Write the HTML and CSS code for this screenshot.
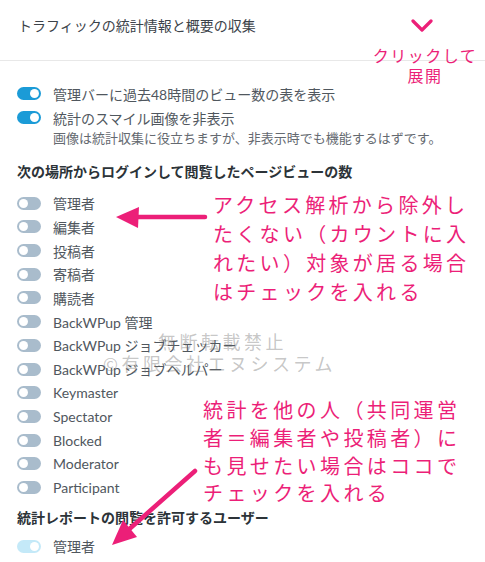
FILE: index.html
```html
<!DOCTYPE html>
<html lang="ja">
<head>
    <meta charset="UTF-8">
    <meta name="viewport" content="width=device-width, initial-scale=1.0">
    <title>トラフィックの統計情報と概要の収集</title>
    <link rel="stylesheet" href="styles.css">
</head>
<body>
    <div class="page">
        <div class="header">
            <h2 class="title">トラフィックの統計情報と概要の収集</h2>
            <svg class="chevron" width="22" height="14" viewBox="0 0 22 14">
                <polyline points="2,2 11,11 20,2" fill="none" stroke="#ec1f78" stroke-width="3.2" stroke-linecap="round" stroke-linejoin="round"/>
            </svg>
        </div>

        <div class="section">
            <div class="row"><span class="toggle on"></span>管理バーに過去48時間のビュー数の表を表示</div>
            <div class="row"><span class="toggle on"></span>統計のスマイル画像を非表示</div>
            <p class="note">画像は統計収集に役立ちますが、非表示時でも機能するはずです。</p>

            <h3 class="heading">次の場所からログインして閲覧したページビューの数</h3>
            <div class="list">
                <div class="row"><span class="toggle"></span>管理者</div>
                <div class="row"><span class="toggle"></span>編集者</div>
                <div class="row"><span class="toggle"></span>投稿者</div>
                <div class="row"><span class="toggle"></span>寄稿者</div>
                <div class="row"><span class="toggle"></span>購読者</div>
                <div class="row"><span class="toggle"></span>BackWPup 管理</div>
                <div class="row"><span class="toggle"></span>BackWPup ジョブチェッカー</div>
                <div class="row"><span class="toggle"></span>BackWPup ジョブヘルパー</div>
                <div class="row"><span class="toggle"></span>Keymaster</div>
                <div class="row"><span class="toggle"></span>Spectator</div>
                <div class="row"><span class="toggle"></span>Blocked</div>
                <div class="row"><span class="toggle"></span>Moderator</div>
                <div class="row"><span class="toggle"></span>Participant</div>
            </div>

            <h3 class="heading second">統計レポートの閲覧を許可するユーザー</h3>
            <div class="row last"><span class="toggle dim"></span>管理者</div>
        </div>

        <!-- annotations laid over the screenshot -->
        <div class="memo memo-click">クリックして<br>展開</div>
        <div class="memo memo-exclude">アクセス解析から除外し<br>たくない（カウントに入<br>れたい）対象が居る場合<br>はチェックを入れる</div>
        <div class="memo memo-share">統計を他の人（共同運営<br>者＝編集者や投稿者）に<br>も見せたい場合はココで<br>チェックを入れる</div>

        <div class="watermark">
            <div class="wm-1">無断転載禁止</div>
            <div class="wm-2">©有限会社エヌシステム</div>
        </div>

        <svg class="arrows" width="485" height="562" viewBox="0 0 485 562">
            <line x1="205" y1="217" x2="134" y2="217" stroke="#ec1f78" stroke-width="4.5" stroke-linecap="round"/>
            <polygon points="116,217 139,207 138,228" fill="#ec1f78"/>
            <line x1="195" y1="471" x2="126" y2="532" stroke="#ec1f78" stroke-width="4.5" stroke-linecap="round"/>
            <polygon points="112,545 137,537 123,520" fill="#ec1f78"/>
        </svg>
    </div>
</body>
</html>
```

FILE: styles.css
```css
body {
    margin: 0;
    background: #fff;
    font-family: Lato, "Noto Sans CJK JP", sans-serif;
    color: #50575e;
}
.page {
    position: relative;
    width: 485px;
    height: 562px;
    overflow: hidden;
}
.header {
    display: flex;
    align-items: center;
    justify-content: space-between;
    height: 61px;
    padding: 0 52px 10px 18px;
    box-sizing: border-box;
    border-bottom: 1px solid #e8e8e8;
}
.title {
    margin: 0;
    font-size: 14px;
    font-weight: normal;
    color: #3c434a;
}
.chevron {
    display: block;
    margin-top: 2px;
}
.section {
    padding: 21px 0 0 17px;
}
.row {
    display: flex;
    align-items: center;
    gap: 12px;
    height: 23.7px;
    font-size: 14px;
    white-space: nowrap;
}
.toggle {
    position: relative;
    flex: none;
    width: 24px;
    height: 13px;
    border-radius: 7px;
    background-color: #a9bccc;
}
.toggle::after {
    content: "";
    position: absolute;
    top: 2px;
    left: 2px;
    width: 9px;
    height: 9px;
    border-radius: 50%;
    background-color: #fff;
}
.toggle.on {
    background-color: #1b9bd7;
}
.toggle.dim {
    background-color: #c4e9f8;
}
.toggle.on::after,
.toggle.dim::after {
    left: 13px;
}
.note {
    margin: 1px 0 0 36px;
    font-size: 13px;
    line-height: 17px;
    color: #646970;
    white-space: nowrap;
}
.heading {
    margin: 15px 0 9px;
    font-size: 14px;
    line-height: 20px;
    font-weight: bold;
    color: #2c3338;
}
.heading.second {
    margin: 9px 0 6px;
}
.memo {
    position: absolute;
    color: #ec1f78;
    font-family: "Noto Sans CJK JP", sans-serif;
    white-space: nowrap;
}
.memo-click {
    top: 45px;
    left: 370px;
    width: 110px;
    font-size: 16px;
    line-height: 20px;
    letter-spacing: 1.5px;
    text-align: center;
}
.memo-exclude {
    top: 190px;
    left: 213px;
    font-size: 20px;
    line-height: 29px;
    letter-spacing: 3.3px;
}
.memo-share {
    top: 396px;
    left: 203px;
    font-size: 20px;
    line-height: 27.8px;
    letter-spacing: 3.4px;
}
.watermark {
    position: absolute;
    top: 330px;
    left: 103px;
    color: rgba(110, 110, 110, 0.4);
    font-family: "Noto Sans CJK JP", sans-serif;
    font-size: 18px;
    line-height: 22px;
    letter-spacing: 3.5px;
    white-space: nowrap;
}
.wm-1 {
    margin-left: 55px;
}
.arrows {
    position: absolute;
    top: 0;
    left: 0;
    pointer-events: none;
}
```
